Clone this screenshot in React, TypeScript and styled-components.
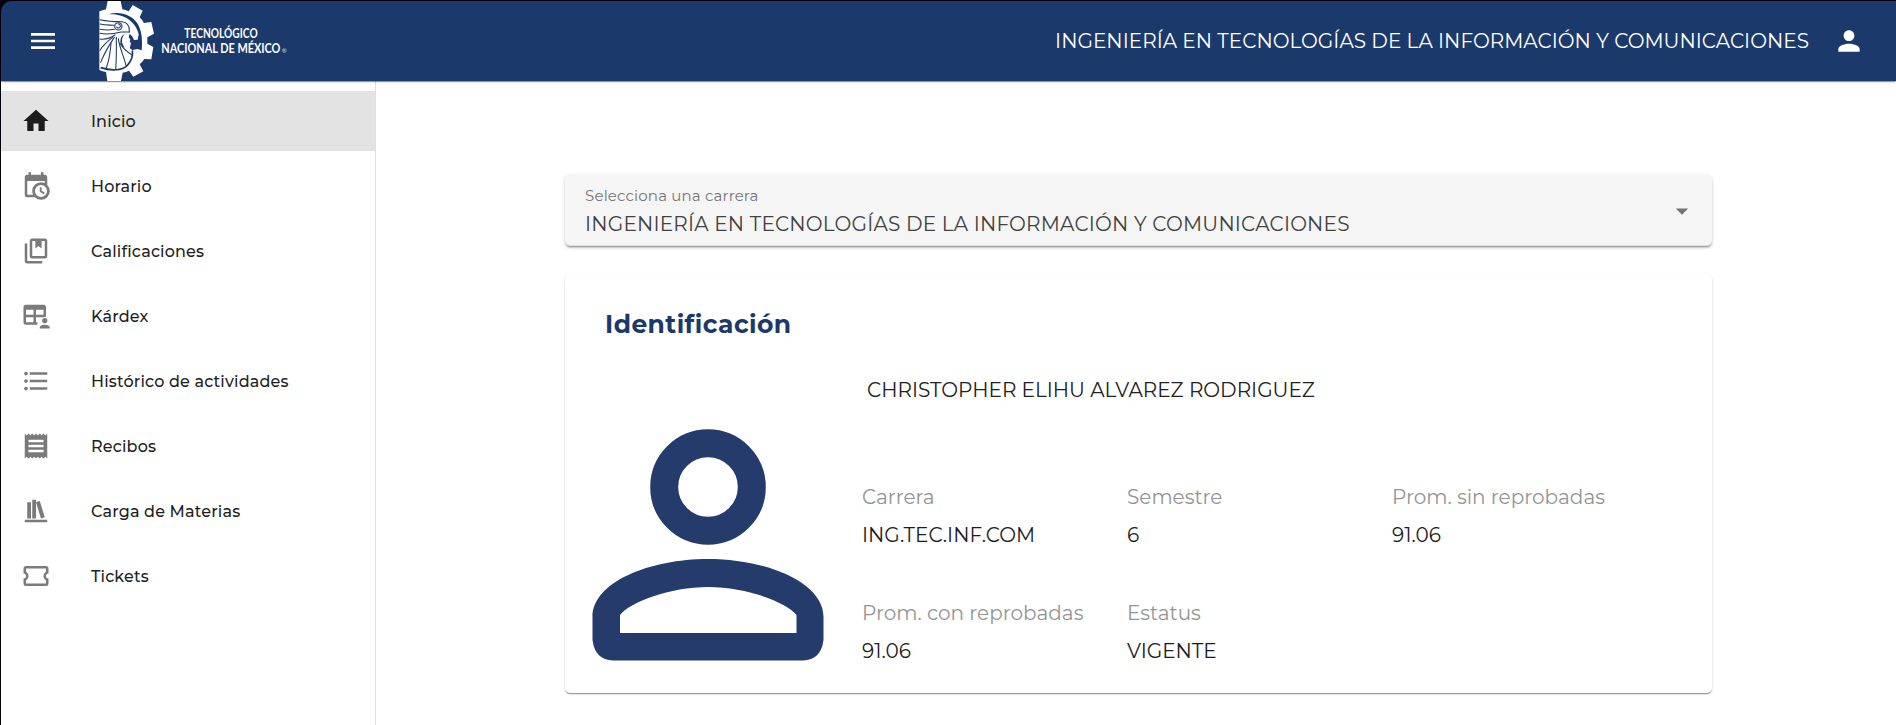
import React from 'react';
import styled, { createGlobalStyle } from 'styled-components';
import { MdArrowDropDown, MdFormatListBulleted, MdHome, MdMenu, MdPerson, MdReceipt } from 'react-icons/md';

const NAVY = '#1b396a';

const GlobalStyle = createGlobalStyle`
  *, *::before, *::after { box-sizing: border-box; }
  body {
    margin: 0;
    background: #05000f;
    font-family: Montserrat, Inter, "Liberation Sans", sans-serif;
    color: #212121;
    overflow: hidden;
  }
`;

const Window = styled.div`
  display: flex;
  flex-direction: column;
  height: 100vh;
  padding: 1px 0 0 1px;
`;

const Header = styled.header`
  display: flex;
  align-items: center;
  flex: 0 0 80px;
  padding: 0 31px 0 26px;
  border-top-left-radius: 11px;
  background: ${NAVY};
  color: #fff;
  box-shadow: 0 2px 1px -1px rgba(0, 0, 0, 0.2), 0 1px 1px rgba(0, 0, 0, 0.24), 0 1px 3px rgba(0, 0, 0, 0.12);
  z-index: 1;
`;

const IconButton = styled.button`
  display: flex;
  padding: 0;
  border: 0;
  background: none;
  color: inherit;
  font-size: 32px;
`;

const Logo = styled.svg`
  width: 190px;
  height: 80px;
  margin-left: 40px;
  overflow: visible;
`;

const HeaderTitle = styled.span`
  margin: 0 24px 0 auto;
  font-size: 20px;
  line-height: 28px;
  letter-spacing: 0.03px;
  white-space: nowrap;
`;

const Body = styled.div`
  display: flex;
  flex: 1;
  min-height: 0;
  background: #fff;
`;

const Sidebar = styled.nav`
  display: flex;
  flex-direction: column;
  gap: 5px;
  flex: 0 0 375px;
  padding-top: 10px;
  background: #fff;
  border-right: 1px solid #dfdfdf;
`;

const NavItem = styled.a<{ $active?: boolean }>`
  display: flex;
  align-items: center;
  gap: 40px;
  height: 60px;
  padding-left: 20px;
  background: ${(p) => (p.$active ? '#e3e3e3' : 'transparent')};
  color: ${(p) => (p.$active ? '#1c1c1c' : '#7a7a7a')};
  font-size: 30px;
`;

const NavLabel = styled.span`
  padding-top: 2px;
  color: #1f1f1f;
  font-size: 16px;
  font-weight: 500;
  line-height: 24px;
  letter-spacing: 0.16px;
`;

const Main = styled.main`
  display: flex;
  flex-direction: column;
  gap: 28px;
  width: 1147px;
  margin: 94px 0 0 189px;
`;

const Select = styled.div`
  display: flex;
  align-items: center;
  justify-content: space-between;
  height: 71px;
  padding: 0 15px 0 20px;
  border-radius: 5px;
  background: #f5f5f5;
  box-shadow: 0 3px 1px -2px rgba(0, 0, 0, 0.22), 0 2px 2px rgba(0, 0, 0, 0.16), 0 1px 5px rgba(0, 0, 0, 0.12),
    inset 0 -1px 0 rgba(0, 0, 0, 0.08);
  color: #757575;
  font-size: 30px;
`;

const SelectText = styled.div`
  display: flex;
  flex-direction: column;
  gap: 1px;
  padding-top: 3px;
`;

const SelectLabel = styled.span`
  font-size: 15px;
  line-height: 22px;
  letter-spacing: 0.17px;
`;

const SelectValue = styled.span`
  font-size: 20px;
  line-height: 32px;
  letter-spacing: 0.21px;
  color: #424242;
`;

const Card = styled.section`
  display: flex;
  flex-direction: column;
  height: 419px;
  padding: 32px 28px 0 27px;
  border-radius: 5px;
  background: #fff;
  box-shadow: 0 2px 1px -1px rgba(0, 0, 0, 0.22), 0 1px 1px rgba(0, 0, 0, 0.2), 0 1px 3px rgba(0, 0, 0, 0.12);
`;

const CardTitle = styled.h2`
  margin: 0 0 0 13px;
  color: ${NAVY};
  font-size: 25px;
  font-weight: 700;
  line-height: 36px;
  letter-spacing: 0.44px;
`;

const Profile = styled.div`
  display: flex;
  gap: 38px;
  margin-top: 34px;
`;

const Avatar = styled.svg`
  width: 232px;
  height: 232px;
  margin-top: 53px;
`;

const Details = styled.div`
  display: flex;
  flex-direction: column;
`;

const StudentName = styled.div`
  margin-left: 5px;
  font-size: 20px;
  line-height: 28px;
`;

const Facts = styled.div`
  display: grid;
  grid-template-columns: repeat(3, 265px);
  row-gap: 40px;
  margin-top: 74px;
`;

const Fact = styled.div`
  display: flex;
  flex-direction: column;
  font-size: 20px;
  line-height: 38px;
`;

const FactLabel = styled.span`
  color: #949494;
  white-space: nowrap;
`;

const FactValue = styled.span`
  color: #1c1c1c;
`;

const Glyph = ({ d }: { d: string }) => (
  <svg width="1em" height="1em" viewBox="0 0 24 24" fill="currentColor" fillRule="evenodd">
    <path d={d} />
  </svg>
);

const CALENDAR_CLOCK =
  'M15 13h1.5v2.82l2.44 1.41-.75 1.3L15 16.69V13M19 8H5v11h4.67C9.24 18.09 9 17.07 9 16a7 7 0 0 1 7-7c1.07 0 2.09.24 3 .67V8M5 21a2 2 0 0 1-2-2V5a2 2 0 0 1 2-2h1V1h2v2h8V1h2v2h1a2 2 0 0 1 2 2v6.1a7 7 0 0 1-9.9 9.9H5M16 11.15a4.85 4.85 0 1 0 0 9.7 4.85 4.85 0 0 0 0-9.7z';
const BOOKS_MARKED =
  'M9 2h10a2 2 0 0 1 2 2v12a2 2 0 0 1-2 2H9a2 2 0 0 1-2-2V4a2 2 0 0 1 2-2zm0 2v12h10V4h-2.5v6L14 8l-2.5 2V4H9zM3 6h2v14h12v2H5a2 2 0 0 1-2-2V6z';
const TABLE_ACCOUNT =
  'M4 3h14a2 2 0 0 1 2 2v7.6a5 5 0 0 0-2 .4h-6v4h1.4c-.3.5-.4 1.2-.4 2H4a2 2 0 0 1-2-2V5a2 2 0 0 1 2-2zM4 7v4h6V7H4zm8 0v4h6V7h-6zM4 13v4h6v-4H4zM19 13.5a2.1 2.1 0 1 1 0 4.2 2.1 2.1 0 0 1 0-4.2zM15 22v-.9c0-1.3 1.8-2.1 4-2.1s4 .8 4 2.1v.9h-8z';
const BOOKSHELF = 'M9 3v15h3V3H9m3 2 4 13 3-1-4-13-3 1M5 5v13h3V5H5M3 19v2h18v-2H3z';
const TICKET =
  'M4 4a2 2 0 0 0-2 2v4a2 2 0 0 1 0 4v4a2 2 0 0 0 2 2h16a2 2 0 0 0 2-2v-4a2 2 0 0 1 0-4V6a2 2 0 0 0-2-2H4m0 2h16v2.54a4 4 0 0 0 0 6.92V18H4v-2.54a4 4 0 0 0 0-6.92V6z';

const NAV = [
  { label: 'Inicio', icon: <MdHome />, active: true },
  { label: 'Horario', icon: <Glyph d={CALENDAR_CLOCK} /> },
  { label: 'Calificaciones', icon: <Glyph d={BOOKS_MARKED} /> },
  { label: 'Kárdex', icon: <Glyph d={TABLE_ACCOUNT} /> },
  { label: 'Histórico de actividades', icon: <MdFormatListBulleted /> },
  { label: 'Recibos', icon: <MdReceipt /> },
  { label: 'Carga de Materias', icon: <Glyph d={BOOKSHELF} /> },
  { label: 'Tickets', icon: <Glyph d={TICKET} /> },
];

const FACTS = [
  { label: 'Carrera', value: 'ING.TEC.INF.COM' },
  { label: 'Semestre', value: '6' },
  { label: 'Prom. sin reprobadas', value: '91.06' },
  { label: 'Prom. con reprobadas', value: '91.06' },
  { label: 'Estatus', value: 'VIGENTE' },
];

const TecLogo = () => (
  <Logo viewBox="297 3 570 240" aria-label="Tecnológico Nacional de México">
    <path
      fill="#fff"
      d="M298 34 Q308 31 318 28L323 3H362L367 28Q377 30 386 34L398 15 428 32 419 52Q427 60 432 69L454 66 462 101 442 112V131L460 141 454 178 433 177Q427 186 419 193L430 214 400 230 387 212Q378 216 368 218L363 243H322L318 216Q308 214 298 210Z"
    />
    <path
      fill={NAVY}
      d="M326 43C358 33 394 44 412 70C425 90 428 121 425 151L412 147 398 150C391 148 388 144 391 138L393 130 389 124 391 119 386 110 389 102C394 105 399 112 402 120L413 119 416 103C411 76 386 50 354 45 345 43 335 43 326 43Z"
    />
    <path fill={NAVY} d="M375 103C366 110 364 122 368 133L374 144C364 139 359 128 362 117 364 109 368 105 375 103Z" />
    <g fill="none" stroke={NAVY} strokeWidth="3.2" strokeLinecap="round">
      <path d="M300 59C322 64 342 65 366 65C382 66 389 77 388 96" />
      <path d="M300 72C316 75 330 75 342 76" />
      <path d="M300 88C316 91 330 91 343 88" />
      <path d="M300 100C324 105 344 101 364 96L388 96" />
      <path d="M300 117C315 119 329 116 345 105" />
      <circle cx="355" cy="79" r="11" />
      <path d="M355 72a6 6 0 1 1-5 9" />
      <path d="M338 112C322 124 308 137 300 151" />
      <path d="M343 112C326 137 312 162 302 187" />
      <path d="M333 130C331 160 326 184 319 204" />
      <path d="M349 112C349 145 350 176 347 207" />
      <path d="M355 116C359 146 372 169 378 197" />
      <path d="M360 130C370 149 384 158 398 166" />
    </g>
    <path
      fill="none"
      stroke={NAVY}
      strokeWidth="5"
      d="M302 203C334 213 366 212 382 196C393 184 400 168 397 151"
    />
    <g fill="#fff" fontFamily="Lato, sans-serif" fontWeight="700" fontSize="37">
      <text x="553" y="115" textLength="220" lengthAdjust="spacingAndGlyphs">TECNOLÓGICO</text>
      <text x="484" y="160" textLength="357" lengthAdjust="spacingAndGlyphs">NACIONAL DE MÉXICO</text>
      <text x="845" y="160" fontSize="18" fontWeight="400" opacity="0.8">®</text>
    </g>
  </Logo>
);

export default function App() {
  return (
    <>
      <GlobalStyle />
      <Window>
        <Header>
          <IconButton aria-label="Menú"><MdMenu /></IconButton>
          <TecLogo />
          <HeaderTitle>INGENIERÍA EN TECNOLOGÍAS DE LA INFORMACIÓN Y COMUNICACIONES</HeaderTitle>
          <IconButton aria-label="Perfil"><MdPerson /></IconButton>
        </Header>
        <Body>
          <Sidebar>
            {NAV.map((item) => (
              <NavItem key={item.label} $active={item.active}>
                {item.icon}
                <NavLabel>{item.label}</NavLabel>
              </NavItem>
            ))}
          </Sidebar>
          <Main>
            <Select>
              <SelectText>
                <SelectLabel>Selecciona una carrera</SelectLabel>
                <SelectValue>INGENIERÍA EN TECNOLOGÍAS DE LA INFORMACIÓN Y COMUNICACIONES</SelectValue>
              </SelectText>
              <MdArrowDropDown />
            </Select>
            <Card>
              <CardTitle>Identificación</CardTitle>
              <Profile>
                <Avatar viewBox="0 0 232 232">
                  <circle cx="116" cy="58" r="43.8" fill="none" stroke="#243b6b" strokeWidth="28" />
                  <path
                    fill="#243b6b"
                    fillRule="evenodd"
                    d="M0.5 188C0.5 153 58 130 116 130S231.5 153 231.5 188V211Q229 231 211 231.5H21Q3 231 0.5 211ZM28 186V204H204.5V186C194 173 154 158 116 158S38 173 28 186Z"
                  />
                </Avatar>
                <Details>
                  <StudentName>CHRISTOPHER ELIHU ALVAREZ RODRIGUEZ</StudentName>
                  <Facts>
                    {FACTS.map((fact) => (
                      <Fact key={fact.label}>
                        <FactLabel>{fact.label}</FactLabel>
                        <FactValue>{fact.value}</FactValue>
                      </Fact>
                    ))}
                  </Facts>
                </Details>
              </Profile>
            </Card>
          </Main>
        </Body>
      </Window>
    </>
  );
}
